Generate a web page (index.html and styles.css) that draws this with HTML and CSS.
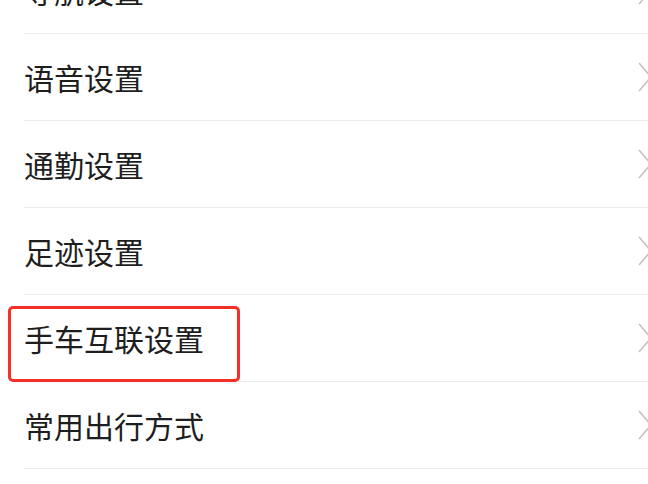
FILE: index.html
```html
<!DOCTYPE html>
<html lang="zh-CN">
<head>
  <meta charset="UTF-8">
  <meta name="viewport" content="width=device-width, initial-scale=1.0">
  <title>设置</title>
  <link rel="stylesheet" href="styles.css">
</head>
<body>
  <ul class="settings">
    <li class="item"><span class="label">导航设置</span><svg class="arrow" viewBox="0 0 16 30"><path d="M2 1 L14 15 L2 29"/></svg></li>
    <li class="item"><span class="label">语音设置</span><svg class="arrow" viewBox="0 0 16 30"><path d="M2 1 L14 15 L2 29"/></svg></li>
    <li class="item"><span class="label">通勤设置</span><svg class="arrow" viewBox="0 0 16 30"><path d="M2 1 L14 15 L2 29"/></svg></li>
    <li class="item"><span class="label">足迹设置</span><svg class="arrow" viewBox="0 0 16 30"><path d="M2 1 L14 15 L2 29"/></svg></li>
    <li class="item marked">
      <span class="label">手车互联设置</span><svg class="arrow" viewBox="0 0 16 30"><path d="M2 1 L14 15 L2 29"/></svg>
      <div class="highlight"></div>
    </li>
    <li class="item"><span class="label">常用出行方式</span><svg class="arrow" viewBox="0 0 16 30"><path d="M2 1 L14 15 L2 29"/></svg></li>
  </ul>
</body>
</html>
```

FILE: styles.css
```css
body {
  margin: 0;
  background: #fff;
  font-family: "Noto Sans CJK SC", "Noto Sans", sans-serif;
  overflow: hidden;
}
.settings {
  list-style: none;
  margin: -53px 0 0 24px;
  padding: 0;
}
.item {
  position: relative;
  display: flex;
  align-items: center;
  justify-content: space-between;
  height: 86px;
  border-bottom: 1px solid #ececec;
}
.label {
  font-size: 30px;
  color: #1e1e1e;
  line-height: 1;
}
.arrow {
  width: 16px;
  height: 30px;
  margin-right: -5px;
  flex-shrink: 0;
}
.arrow path {
  fill: none;
  stroke: #c2c2c2;
  stroke-width: 1.6;
}
.highlight {
  position: absolute;
  left: -16px;
  top: 11px;
  width: 226px;
  height: 70px;
  border: 3px solid #f5302a;
  border-radius: 5px;
}
```
